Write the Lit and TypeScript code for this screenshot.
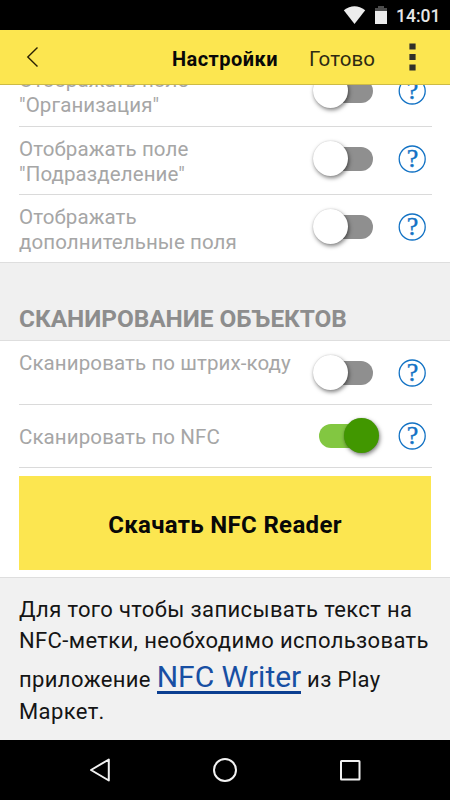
import { LitElement, html, css } from "lit";
import { customElement, property } from "lit/decorators.js";
import { classMap } from "lit/directives/class-map.js";

@customElement("toggle-switch")
class ToggleSwitch extends LitElement {
  @property({ type: Boolean }) on = false;
  static styles = css`
    :host { display: block; width: 66px; height: 36px; }
    .track { position: relative; width: 55px; height: 24px; margin: 6px 0 0 5px; border-radius: 12px; background: #8f8f8f; }
    .knob { position: absolute; left: -5px; top: -6px; width: 35px; height: 35px; border-radius: 50%; background: #fff; box-shadow: 1px 2px 4px rgba(0, 0, 0, 0.5), 0 0 1px rgba(0, 0, 0, 0.2); }
    .track.on { background: #82c741; margin-left: 6px; width: 54px; }
    .on .knob { left: 24.5px; background: #419700; }
  `;
  render() {
    return html`<div class=${classMap({ track: true, on: this.on })}><div class="knob"></div></div>`;
  }
}

@customElement("help-button")
class HelpButton extends LitElement {
  static styles = css`
    :host { display: block; width: 28px; height: 28px; }
    svg { display: block; }
    text { font: 26px "Liberation Serif", serif; fill: #1272c4; stroke: #1272c4; stroke-width: 0.4; }
  `;
  render() {
    return html`<svg width="28" height="28" viewBox="0 0 28 28">
      <circle cx="14.2" cy="14" r="13" fill="none" stroke="#1272c4" stroke-width="1.3" />
      <text x="14.4" y="22.3" text-anchor="middle">?</text>
    </svg>`;
  }
}

@customElement("setting-row")
class SettingRow extends LitElement {
  @property({ type: Array }) lines: string[] = [];
  @property({ type: Boolean }) on = false;
  static styles = css`
    :host { display: flex; box-sizing: border-box; align-items: center; margin: 0 18px 0 19px; border-bottom: 1px solid #dadada; }
    .label { flex: 1; padding-top: var(--label-top, 2px); padding-bottom: var(--label-bottom, 0px); font-size: 20.5px; line-height: 24.4px; letter-spacing: 0.1px; color: #a6a6a6; white-space: nowrap; }
    .label div { width: max-content; }
    toggle-switch { flex: none; margin-right: 19px; margin-bottom: var(--control-bottom, 0px); }
    help-button { flex: none; margin-right: 6px; margin-bottom: var(--control-bottom, 0px); }
  `;
  render() {
    return html`<div class="label">${this.lines.map((l) => html`<div>${l}</div>`)}</div>
      <toggle-switch ?on=${this.on}></toggle-switch><help-button></help-button>`;
  }
}

@customElement("app-root")
class AppRoot extends LitElement {
  static styles = css`
    :host { display: flex; flex-direction: column; width: 450px; height: 800px; overflow: hidden; background: #fff; font-family: Roboto, "Liberation Sans", sans-serif; color: #111; }
    .status { flex: none; height: 30px; background: #000; display: flex; align-items: center; justify-content: flex-end; padding-right: 12px; color: #e6e6e6; }
    .status svg { flex: none; }
    .time { width: 42px; margin-left: 9px; font-size: 17.5px; font-weight: 500; white-space: nowrap; padding-top: 1px; }
    .bar { flex: none; box-sizing: border-box; height: 55px; background: #fce650; border-bottom: 1px solid #cdbb45; display: flex; align-items: center; white-space: nowrap; }
    .back { margin-left: 26px; width: 146px; }
    .back svg, .more svg { display: block; }
    .title { width: 137px; font-size: 20px; font-weight: 700; color: #080808; letter-spacing: 0.45px; padding-top: 3px; }
    .done { width: 100px; font-size: 20.5px; color: #2e2a12; letter-spacing: 0.1px; padding-top: 3px; }
    .content { flex: 1; min-height: 0; overflow: hidden; display: flex; flex-direction: column; }
    .tall { height: 68px; flex: none; --control-bottom: 4px; }
    .first { margin-top: -26px; --label-top: 0px; }
    .last { border-bottom-color: transparent; height: 67px; --control-bottom: 3px; --label-top: 3px; }
    .barcode { height: 64px; flex: none; --label-top: 0px; --label-bottom: 18px; }
    .nfc { height: 63px; flex: none; }
    .section { flex: none; box-sizing: border-box; height: 79px; background: #f0f0f0; border-top: 1px solid #dedede; border-bottom: 1px solid #dedede; padding: 41px 0 0 19px; font-size: 24.4px; line-height: 29px; font-weight: 700; letter-spacing: -0.03px; color: #8d8d8d; white-space: nowrap; }
    .download { flex: none; box-sizing: border-box; margin: 8px 19px 7px; height: 94px; background: #fce650; display: flex; align-items: center; justify-content: center; font-size: 24px; font-weight: 700; letter-spacing: 0.32px; color: #080808; padding-top: 3px; white-space: nowrap; }
    .note { flex: 1; background: #f1f1f1; border-top: 1px solid #dedede; padding: 16px 0 0 19px; font-size: 22px; line-height: 31px; letter-spacing: 0.37px; white-space: nowrap; color: #151515; }
    .note div { width: max-content; }
    .note .linked { height: 40px; line-height: 47px; }
    .link { color: #184fa3; font-size: 30px; letter-spacing: 0; border-bottom: 3px solid #0b3f91; display: inline-block; line-height: 28px; }
    .nav { flex: none; height: 60px; background: #000; }
    .nav svg { display: block; }
  `;
  render() {
    return html`
      <div class="status">
        <svg width="44" height="30" viewBox="0 0 44 30">
          <path d="M11.5 24 L0.8 10.2 Q11.5 2.2 22.2 10.2 Z" fill="#ececec" />
          <path d="M32 8h3V6h6v2h3v3H32z" fill="#4c4c4c" />
          <path d="M32 11h12v13H32z" fill="#ececec" />
        </svg>
        <div class="time">14:01</div>
      </div>
      <div class="bar">
        <div class="back"><svg width="14" height="22" viewBox="0 0 14 22"><path d="M11.5 1.5 L1.8 11 L11.5 20.5" fill="none" stroke="#2b2204" stroke-width="1.4" /></svg></div>
        <div class="title">Настройки</div>
        <div class="done">Готово</div>
        <div class="more"><svg width="7" height="28" viewBox="0 0 7 28"><path d="M0.4 0.5h6.2v6H0.4zM0.4 11h6.2v6H0.4zM0.4 21.5h6.2v6H0.4z" fill="#30302a" /></svg></div>
      </div>
      <div class="content">
        <setting-row class="tall first" .lines=${["Отображать поле", '"Организация"']}></setting-row>
        <setting-row class="tall" .lines=${["Отображать поле", '"Подразделение"']}></setting-row>
        <setting-row class="tall last" .lines=${["Отображать", "дополнительные поля"]}></setting-row>
        <div class="section">СКАНИРОВАНИЕ ОБЪЕКТОВ</div>
        <setting-row class="barcode" .lines=${["Сканировать по штрих-коду"]}></setting-row>
        <setting-row class="nfc" on .lines=${["Сканировать по NFC"]}></setting-row>
        <div class="download">Скачать NFC Reader</div>
        <div class="note">
          <div>Для того чтобы записывать текст на</div>
          <div>NFC-метки, необходимо использовать</div>
          <div class="linked">приложение <span class="link">NFC Writer</span> из Play</div>
          <div>Маркет.</div>
        </div>
      </div>
      <div class="nav">
        <svg width="450" height="60" viewBox="0 0 450 60" fill="none" stroke="#f2f2f2" stroke-width="2" stroke-linejoin="round">
          <path d="M108.8 19.5 V40.5 L91 30 Z" />
          <circle cx="225" cy="30" r="11" />
          <rect x="341" y="21" width="18.5" height="18.5" rx="0.5" />
        </svg>
      </div>
    `;
  }
}
